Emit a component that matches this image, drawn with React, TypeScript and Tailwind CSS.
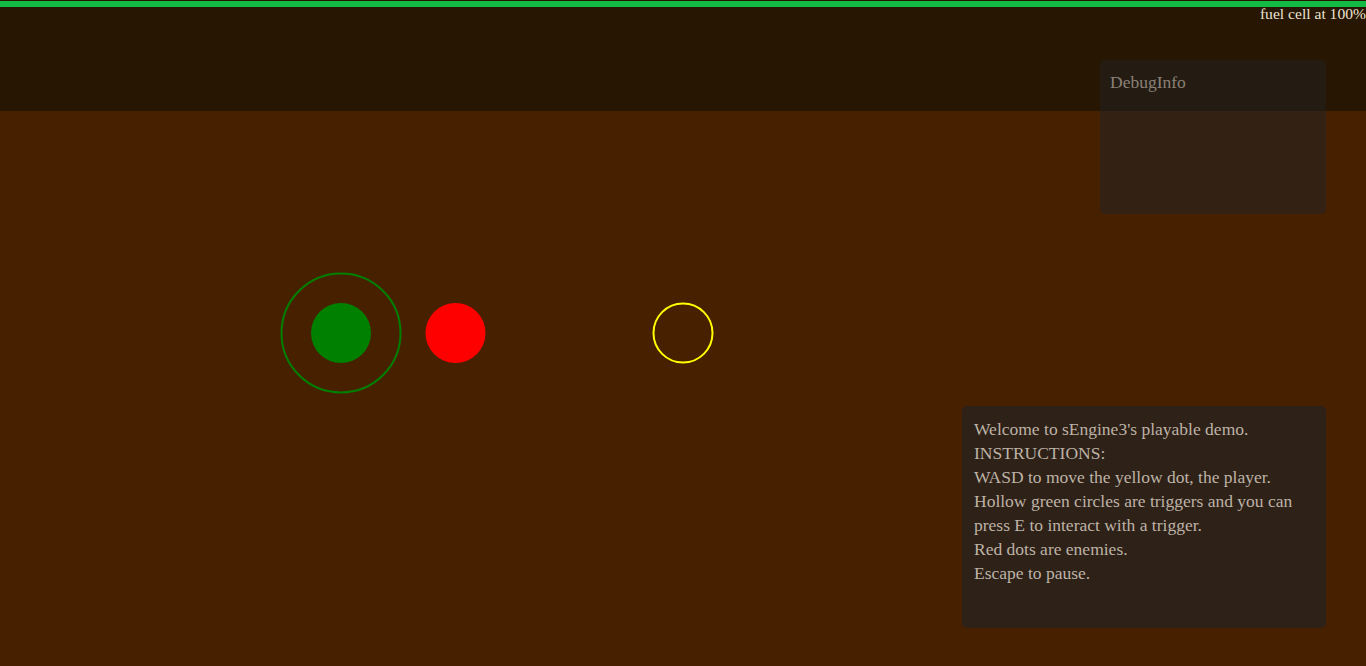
import React from "react";

const serif = { fontFamily: '"Liberation Serif", "DejaVu Serif", serif' };

export default function App() {
  return (
    <div
      className="relative h-[666px] w-[1366px] overflow-hidden bg-[#472000]"
      style={serif}
    >
      {/* top band */}
      <div className="h-[111px] bg-[#261602] pt-px">
        <div className="h-[6px] bg-[#12bc44]" />
        <div className="flex justify-end text-[15.6px] leading-[14px] text-[#ebe3d3]">
          fuel cell at 100%
        </div>
      </div>

      {/* game canvas */}
      <svg
        className="absolute left-0 top-0"
        width={1366}
        height={666}
        viewBox="0 0 1366 666"
      >
        <circle cx={341} cy={333} r={59.5} fill="none" stroke="#008000" strokeWidth={2} />
        <circle cx={341} cy={333} r={30} fill="#008000" />
        <circle cx={455.5} cy={333} r={30} fill="#ff0000" />
        <circle cx={683} cy={333} r={29.5} fill="none" stroke="#ffff00" strokeWidth={2} />
      </svg>

      {/* debug panel */}
      <div className="absolute left-[1100px] top-[60px] h-[154px] w-[226px] rounded-[5px] bg-[#222222]/55 px-[10px] pt-[10px] text-[17.5px] leading-[24px] text-[#8b8176]">
        DebugInfo
      </div>

      {/* instructions panel */}
      <div className="absolute left-[962px] top-[406px] h-[222px] w-[364px] rounded-[5px] bg-[#222222]/70 px-[12px] pt-[11px] text-[17.5px] leading-[24px] text-[#beb3a6]">
        <div>Welcome to sEngine3's playable demo.</div>
        <div>INSTRUCTIONS:</div>
        <div>WASD to move the yellow dot, the player.</div>
        <div>Hollow green circles are triggers and you can</div>
        <div>press E to interact with a trigger.</div>
        <div>Red dots are enemies.</div>
        <div>Escape to pause.</div>
      </div>
    </div>
  );
}
